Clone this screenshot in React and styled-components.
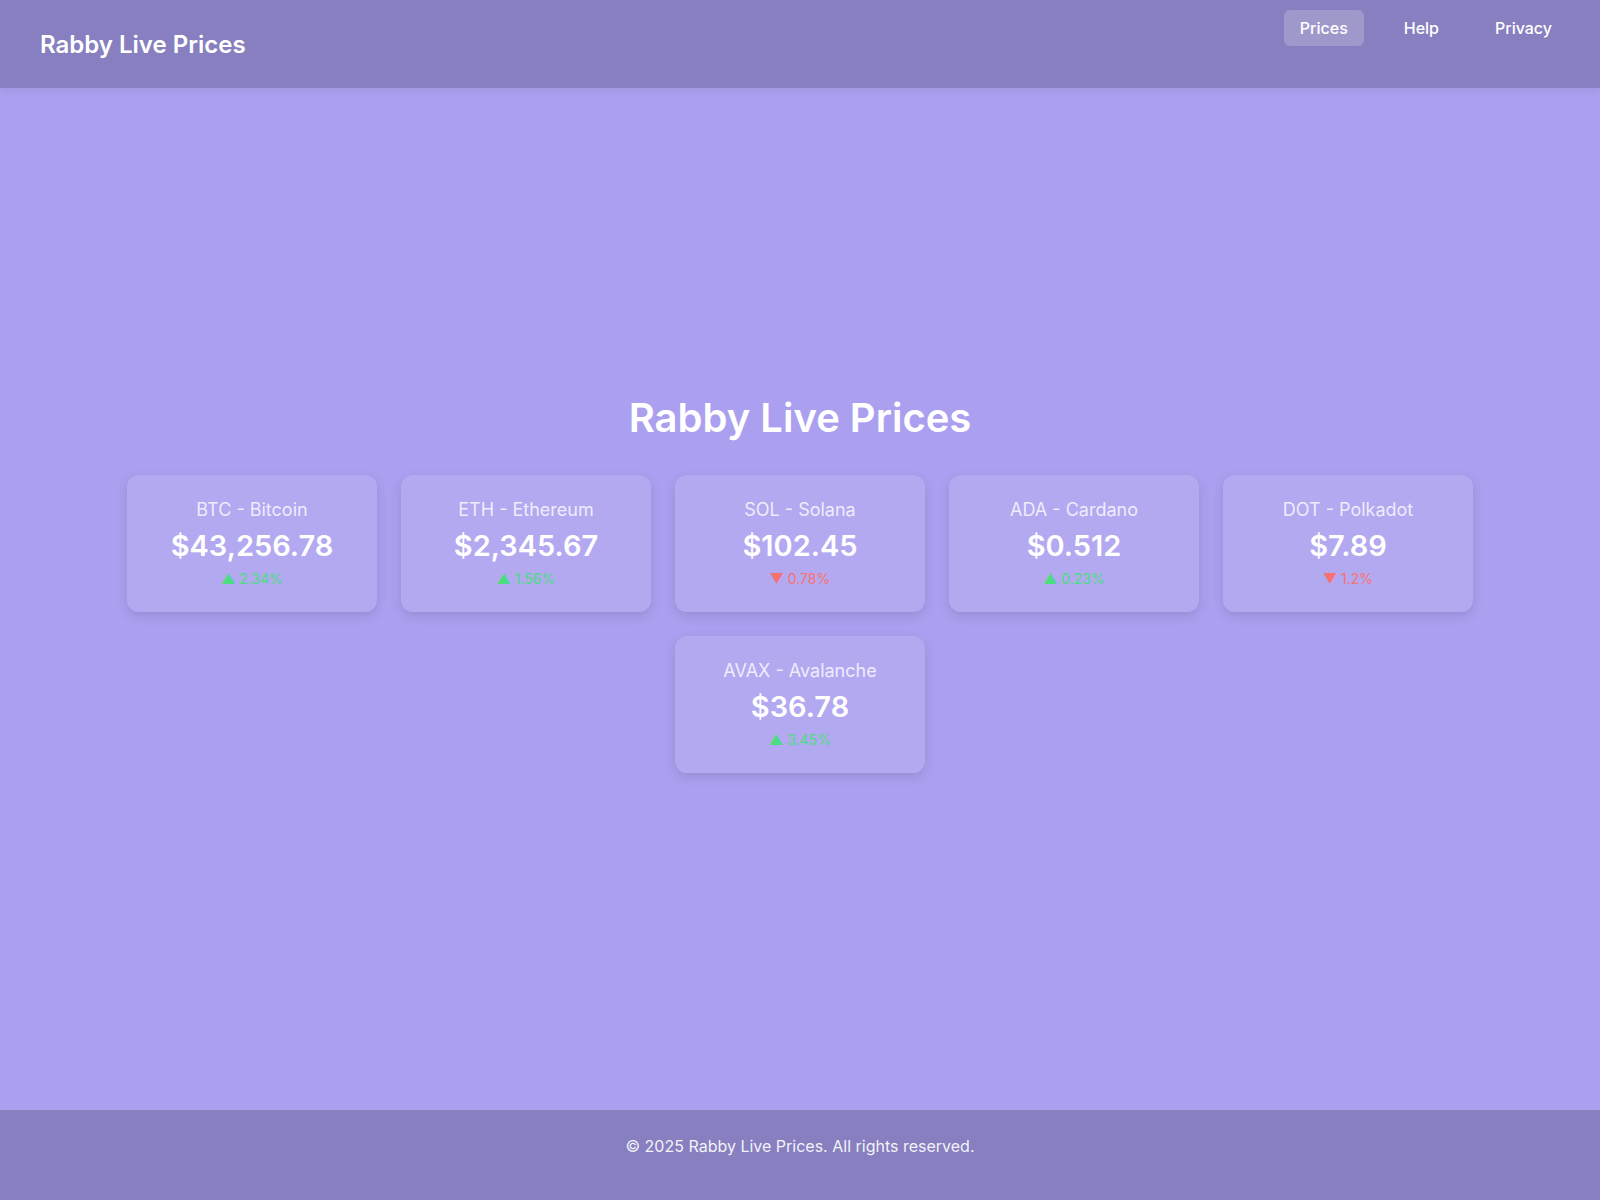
import React from 'react';
import styled, { createGlobalStyle } from 'styled-components';

const coins = [
  { symbol: 'BTC', name: 'Bitcoin', price: '$43,256.78', change: 2.34 },
  { symbol: 'ETH', name: 'Ethereum', price: '$2,345.67', change: 1.56 },
  { symbol: 'SOL', name: 'Solana', price: '$102.45', change: -0.78 },
  { symbol: 'ADA', name: 'Cardano', price: '$0.512', change: 0.23 },
  { symbol: 'DOT', name: 'Polkadot', price: '$7.89', change: -1.2 },
  { symbol: 'AVAX', name: 'Avalanche', price: '$36.78', change: 3.45 },
];

const GlobalStyle = createGlobalStyle`
  * { box-sizing: border-box; }
  html, body {
    margin: 0;
    padding: 0;
    background: #aba0f0;
    font-family: Inter, "Noto Sans", sans-serif;
    color: #fff;
  }
`;

const App = () => (
  <>
    <GlobalStyle />
    <Page>
      <Header>
        <Logo>Rabby Live Prices</Logo>
        <Nav>
          <NavLink $active>Prices</NavLink>
          <NavLink>Help</NavLink>
          <NavLink>Privacy</NavLink>
        </Nav>
      </Header>
      <Main>
        <Title>Rabby Live Prices</Title>
        <Grid>
          {coins.map((c) => (
            <Card key={c.symbol}>
              <CoinName>{c.symbol} - {c.name}</CoinName>
              <Price>{c.price}</Price>
              <Change $up={c.change >= 0}>
                {c.change >= 0 ? '▲' : '▼'} {Math.abs(c.change)}%
              </Change>
            </Card>
          ))}
        </Grid>
      </Main>
      <Footer>© 2025 Rabby Live Prices. All rights reserved.</Footer>
    </Page>
  </>
);

export default App;

const Page = styled.div`
  display: flex;
  flex-direction: column;
  min-height: 1200px;
`;

const Header = styled.header`
  display: flex;
  justify-content: space-between;
  align-items: flex-start;
  height: 88px;
  padding: 10px 32px 0 40px;
  background: #877fbf;
  box-shadow: 0 2px 8px rgba(0, 0, 0, 0.08);
`;

const Logo = styled.h1`
  margin: 0;
  padding-top: 20px;
  font-size: 24px;
  line-height: 29px;
  font-weight: 600;
`;

const Nav = styled.nav`
  display: flex;
  gap: 24px;
`;

const NavLink = styled.a`
  display: block;
  padding: 8px 16px;
  border-radius: 6px;
  font-size: 16px;
  line-height: 20px;
  font-weight: 500;
  color: #fff;
  background: ${(p) => (p.$active ? 'rgba(255, 255, 255, 0.2)' : 'transparent')};
  cursor: pointer;
`;

const Main = styled.main`
  flex: 1;
  display: flex;
  flex-direction: column;
  align-items: center;
  justify-content: center;
  padding-bottom: 32px;
`;

const Title = styled.h2`
  margin: 0 0 33px;
  font-size: 40px;
  line-height: 48px;
  font-weight: 600;
`;

const Grid = styled.div`
  display: flex;
  flex-wrap: wrap;
  justify-content: center;
  gap: 24px;
  max-width: 1400px;
`;

const Card = styled.div`
  width: 250px;
  height: 137px;
  padding: 23px 16px 0;
  border-radius: 12px;
  background: rgba(255, 255, 255, 0.1);
  box-shadow: 0 4px 12px rgba(0, 0, 0, 0.12);
  text-align: center;
`;

const CoinName = styled.div`
  font-size: 18px;
  line-height: 24px;
  color: rgba(255, 255, 255, 0.8);
`;

const Price = styled.div`
  margin-top: 6px;
  font-size: 29px;
  line-height: 36px;
  font-weight: 600;
`;

const Change = styled.div`
  margin-top: 5px;
  font-size: 14px;
  line-height: 20px;
  color: ${(p) => (p.$up ? '#4ade80' : '#f87171')};
`;

const Footer = styled.footer`
  height: 90px;
  padding-top: 24px;
  background: #877fbf;
  text-align: center;
  font-size: 16px;
  line-height: 24px;
  color: rgba(255, 255, 255, 0.92);
`;
